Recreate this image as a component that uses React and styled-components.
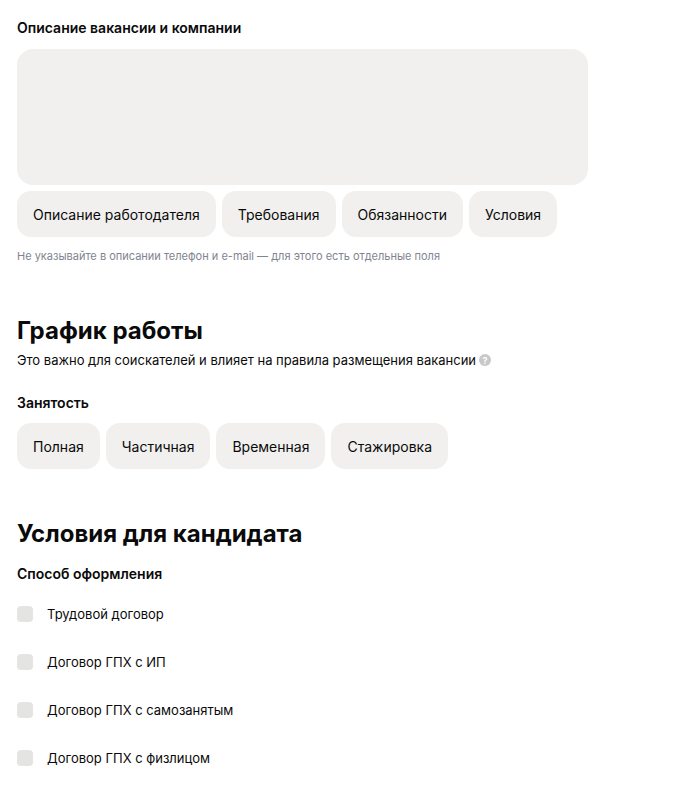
import React from "react";
import styled, { createGlobalStyle } from "styled-components";

const Global = createGlobalStyle`
  body { margin: 0; background: #fff; font-family: Inter, "Noto Sans", sans-serif; color: #0a0a0a; }
`;
const Page = styled.div`padding: 19px 17px 0 17px; width: 571px;`;
const Label = styled.div`font-size: 14px; font-weight: 600; line-height: 18px; margin-bottom: ${p => p.mb || 12}px;`;
const TextArea = styled.div`height: 136px; background: #f1f0ee; border-radius: 16px;`;
const Chips = styled.div`display: flex; gap: 6px; margin-top: ${p => p.mt || 0}px;`;
const Chip = styled.div`height: 46px; padding: 0 16px; display: flex; align-items: center; background: #f1f0ee; border-radius: 14px; font-size: 14px;`;
const Hint = styled.div`font-size: 11px; color: #7f8590; margin-top: 12px; line-height: 14px;`;
const H2 = styled.h2`font-size: 24px; font-weight: 700; margin: ${p => p.mt}px 0 0; line-height: 30px;`;
const Sub = styled.div`font-size: 13px; margin-top: 6px; display: flex; align-items: center; gap: 3px; margin-bottom: 26px;`;
const Q = styled.span`width: 12px; height: 12px; border-radius: 50%; background: #c8c8c8; color: #fff; font-size: 9px; display: inline-flex; align-items: center; justify-content: center; font-weight: 700;`;
const List = styled.div`display: flex; flex-direction: column; gap: 30px; margin-top: 22px;`;
const Row = styled.div`display: flex; align-items: center; gap: 14px; font-size: 13px; height: 18px;`;
const Box = styled.span`width: 16px; height: 16px; border-radius: 4px; background: #e4e4e2;`;

export default function App() {
  return (
    <Page>
      <Global />
      <Label>Описание вакансии и компании</Label>
      <TextArea />
      <Chips mt={6}>
        {["Описание работодателя", "Требования", "Обязанности", "Условия"].map(t => <Chip key={t}>{t}</Chip>)}
      </Chips>
      <Hint>Не указывайте в описании телефон и e-mail — для этого есть отдельные поля</Hint>
      <H2 mt={53}>График работы</H2>
      <Sub>Это важно для соискателей и влияет на правила размещения вакансии <Q>?</Q></Sub>
      <Label mb={11}>Занятость</Label>
      <Chips>
        {["Полная", "Частичная", "Временная", "Стажировка"].map(t => <Chip key={t}>{t}</Chip>)}
      </Chips>
      <H2 mt={50}>Условия для кандидата</H2>
      <Label mb={0} style={{ marginTop: 16 }}>Способ оформления</Label>
      <List>
        {["Трудовой договор", "Договор ГПХ с ИП", "Договор ГПХ с самозанятым", "Договор ГПХ с физлицом"].map(t => (
          <Row key={t}><Box />{t}</Row>
        ))}
      </List>
    </Page>
  );
}
